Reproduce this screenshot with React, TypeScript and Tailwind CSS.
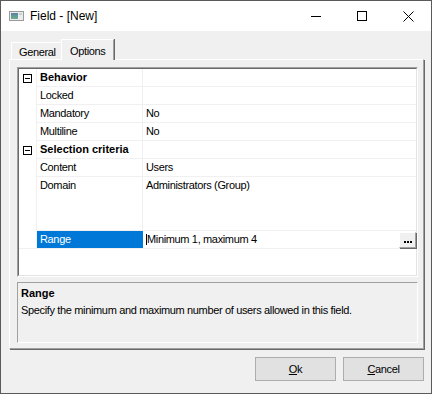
import React from 'react';

type Row = { cat?: string; label?: string; value?: string; tall?: boolean };

const rows: Row[] = [
  { cat: 'Behavior' },
  { label: 'Locked', value: '' },
  { label: 'Mandatory', value: 'No' },
  { label: 'Multiline', value: 'No' },
  { cat: 'Selection criteria' },
  { label: 'Content', value: 'Users' },
  { label: 'Domain', value: 'Administrators (Group)', tall: true },
];

const AppIcon = () => (
  <svg width="15" height="10" viewBox="0 0 15 10">
    <defs>
      <linearGradient id="ico" x1="0" y1="0" x2="0" y2="1">
        <stop offset="0" stopColor="#5b7fa8" />
        <stop offset="1" stopColor="#6cb187" />
      </linearGradient>
    </defs>
    <rect x="0.5" y="0.5" width="14" height="9" fill="#ececec" stroke="#9a9a9a" />
    <rect x="2" y="2" width="7" height="6" fill="url(#ico)" />
    <rect x="10" y="2" width="3" height="2" fill="#c4d0d8" />
  </svg>
);

const Collapse = () => (
  <div className="w-[9px] h-[9px] border border-[#000] bg-white flex items-center justify-center">
    <div className="w-[5px] h-px bg-black" />
  </div>
);

const App: React.FC = () => {
  return (
    <div className="w-[432px] h-[394px] bg-[#f0f0f0] border border-[#5a5a5a] flex flex-col font-['Liberation_Sans',Arial,sans-serif] text-[11px] leading-[13px] text-black overflow-hidden">
      {/* Title bar */}
      <div className="h-[30px] bg-white flex items-center shrink-0">
        <div className="ml-[8px] flex"><AppIcon /></div>
        <span className="ml-[6px] text-[12px] leading-[16px]">Field - [New]</span>
        <div className="ml-auto flex h-full">
          <div className="w-[46px] flex items-center justify-center">
            <svg width="10" height="10" viewBox="0 0 10 10"><path d="M0 5.5h10" stroke="#000" strokeWidth="1" /></svg>
          </div>
          <div className="w-[46px] flex items-center justify-center">
            <svg width="10" height="10" viewBox="0 0 10 10"><rect x="0.5" y="0.5" width="9" height="9" fill="none" stroke="#000" /></svg>
          </div>
          <div className="w-[46px] flex items-center justify-center">
            <svg width="11" height="11" viewBox="0 0 11 11"><path d="M0.5 0.5l10 10M10.5 0.5l-10 10" stroke="#000" strokeWidth="1" /></svg>
          </div>
        </div>
      </div>

      {/* Body */}
      <div className="flex-1 flex flex-col pl-[8px] pr-[7px]">
        {/* Tabs */}
        <div className="h-[29px] -mb-[1px] flex items-end pl-[2px] relative z-10 shrink-0">
          <div className="w-[50px] h-[17px] mb-[1px] border-l border-t border-white pl-[7px] pt-[3px] tracking-[-0.35px]">
            General
          </div>
          <div className="w-[53px] h-[21px] bg-[#f0f0f0] border-l border-t border-r border-l-white border-t-white border-r-[#a0a0a0] shadow-[1px_0_0_#696969] pl-[8px] pt-[5px] tracking-[-0.35px]">
            Options
          </div>
        </div>

        {/* Tab page */}
        <div className="h-[290px] border border-l-white border-t-white border-r-[#a0a0a0] border-b-[#a0a0a0] shadow-[1px_1px_0_#696969] pl-[7px] pr-[5px] pt-[7px] flex flex-col shrink-0">
          {/* Property grid */}
          <div className="w-[401px] h-[210px] border border-t-[#a0a0a0] border-l-[#a0a0a0] border-r-white border-b-white">
            <div className="h-full border border-t-[#696969] border-l-[#696969] border-r-[#e3e3e3] border-b-[#e3e3e3] bg-white flex flex-col">
              {rows.map((r, i) => (
                <div key={i} className={`flex ${r.tall ? 'h-[54px]' : 'h-[18px]'}`}>
                  <div className="w-[18px] shrink-0 border-r border-[#f0f0f0] flex items-center justify-center">
                    {r.cat && <Collapse />}
                  </div>
                  <div className={`w-[106px] shrink-0 border-r border-b border-[#f0f0f0] pl-[3px] ${r.tall ? 'pt-[2px]' : 'flex items-center'} ${r.cat ? 'font-bold whitespace-nowrap' : 'tracking-[-0.35px]'}`}>
                    {r.cat ?? r.label}
                  </div>
                  <div className={`flex-1 border-b border-[#f0f0f0] pl-[3px] tracking-[-0.35px] ${r.tall ? 'pt-[2px]' : 'flex items-center'}`}>
                    {r.value}
                  </div>
                </div>
              ))}
              {/* Selected row */}
              <div className="flex h-[18px] border-b border-[#f0f0f0]">
                <div className="w-[18px] shrink-0 border-r border-[#f0f0f0]" />
                <div className="w-[106px] shrink-0 bg-[#0078d7] text-white pl-[3px] flex items-center tracking-[-0.35px]">
                  Range
                </div>
                <div className="flex-1 flex items-center pl-[3px]">
                  <div className="w-px h-[11px] bg-black" />
                  <span className="tracking-[-0.35px]">Minimum 1, maximum 4</span>
                  <div className="ml-auto self-end w-[17px] h-[16px] bg-[#f0f0f0] border-l border-t border-white border-r border-b border-r-[#a0a0a0] border-b-[#a0a0a0] shadow-[1px_1px_0_#696969] flex items-center justify-center gap-[1px] pt-[3px]">
                    <div className="w-[2px] h-[2px] bg-black" />
                    <div className="w-[2px] h-[2px] bg-black" />
                    <div className="w-[2px] h-[2px] bg-black" />
                  </div>
                </div>
              </div>
            </div>
          </div>

          {/* Description */}
          <div className="mt-[5px] w-[401px] h-[61px] border border-t-[#a0a0a0] border-l-[#a0a0a0] border-r-white border-b-white pl-[3px] pt-[4px]">
            <div className="font-bold">Range</div>
            <div className="mt-[4px] tracking-[-0.35px]">Specify the minimum and maximum number of users allowed in this field.</div>
          </div>
        </div>

        {/* Buttons */}
        <div className="mt-[8px] flex justify-end gap-[7px]">
          <button className="w-[81px] h-[24px] bg-[#e1e1e1] border border-[#adadad] flex items-center justify-center tracking-[-0.35px]">
            <span><span className="underline">O</span>k</span>
          </button>
          <button className="w-[81px] h-[24px] bg-[#e1e1e1] border border-[#adadad] flex items-center justify-center tracking-[-0.35px]">
            <span><span className="underline">C</span>ancel</span>
          </button>
        </div>
      </div>
    </div>
  );
};

export default App;
